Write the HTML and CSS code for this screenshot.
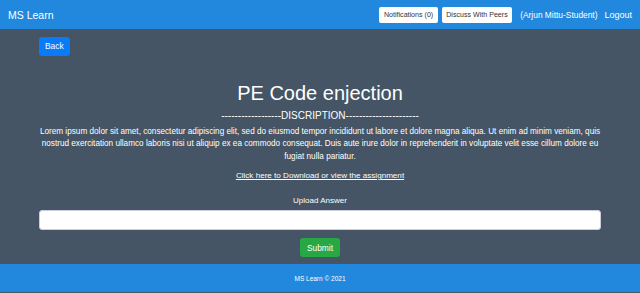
FILE: index.html
```html
<!DOCTYPE html>
<html lang="en">
<head>
  <meta charset="UTF-8" />
  <title>MS Learn</title>
  <link rel="stylesheet" href="styles.css">
</head>
<body>
  <header class="topbar">
    <a class="brand" href="#">MS Learn</a>
    <nav class="topnav">
      <button class="nav-btn">Notifications (0)</button>
      <button class="nav-btn">Discuss With Peers</button>
      <span class="user">(Arjun Mittu-Student)</span>
      <a class="logout" href="#">Logout</a>
    </nav>
  </header>

  <main class="content">
    <div class="back-row">
      <button class="btn btn-back">Back</button>
    </div>

    <h1 class="title">PE Code enjection</h1>
    <h2 class="subtitle">------------------DISCRIPTION----------------------</h2>
    <p class="desc">Lorem ipsum dolor sit amet, consectetur adipiscing elit, sed do eiusmod tempor incididunt ut labore et dolore magna aliqua. Ut enim ad minim veniam, quis nostrud exercitation ullamco laboris nisi ut aliquip ex ea commodo consequat. Duis aute irure dolor in reprehenderit in voluptate velit esse cillum dolore eu fugiat nulla pariatur.</p>
    <a class="download" href="#">Click here to Download or view the assignment</a>

    <form class="upload">
      <label for="answer">Upload Answer</label>
      <input type="text" id="answer" name="answer" />
      <button type="submit" class="btn btn-submit">Submit</button>
    </form>
  </main>

  <footer class="footer">MS Learn &copy; 2021</footer>
</body>
</html>
```

FILE: styles.css
```css
:root {
  --blue: #2188dd; --bg: #455565; --primary: #0a7bf7; --success: #28a745;
  --text: #fff;
}
body { margin: 0; font-family: "Liberation Sans", Arial, sans-serif; background: var(--bg); color: var(--text); }
a { color: var(--text); }

/* Top bar */
.topbar { background: var(--blue); height: 29px; display: flex; align-items: center; justify-content: space-between; padding: 0 8px; box-sizing: border-box; }
.brand { font-size: 10.5px; text-decoration: none; }
.topnav { display: flex; align-items: center; }
.nav-btn { background: #fff; color: #333; border: none; border-radius: 2px; font-family: inherit; font-size: 7.1px; height: 16px; padding: 0 4.5px; margin-right: 4px; }
.user { font-size: 8.4px; margin-left: 4px; }
.logout { font-size: 9px; text-decoration: none; margin-left: 7px; }

/* Main content */
.content { padding: 6px 39px 0; text-align: center; }
.back-row { text-align: left; }
.btn { border: none; border-radius: 3px; color: #fff; font-family: inherit; font-size: 8.4px; cursor: pointer; }
.btn-back { background: var(--primary); height: 19px; padding: 0 6px; }
.title { font-size: 20px; font-weight: 400; margin: 24px 0 0; line-height: 26px; }
.subtitle { font-size: 10px; font-weight: 400; margin: 4px 0 0; line-height: 12px; }
.desc { font-size: 8.2px; line-height: 12.5px; margin: 4px -2px 0; }
.download { display: inline-block; font-size: 8.1px; margin-top: 7px; line-height: 12px; }

.upload { display: flex; flex-direction: column; align-items: center; margin-top: 13px; }
.upload label { font-size: 8px; line-height: 12px; }
.upload input { width: 100%; height: 20px; box-sizing: border-box; border: 1px solid #ccd; border-radius: 3px; margin-top: 3px; }
.btn-submit { background: var(--success); height: 19px; padding: 0 6.5px; margin-top: 8px; }

.footer { background: var(--blue); margin-top: 7px; height: 28px; display: flex; align-items: center; justify-content: center; font-size: 6.5px; }
```
